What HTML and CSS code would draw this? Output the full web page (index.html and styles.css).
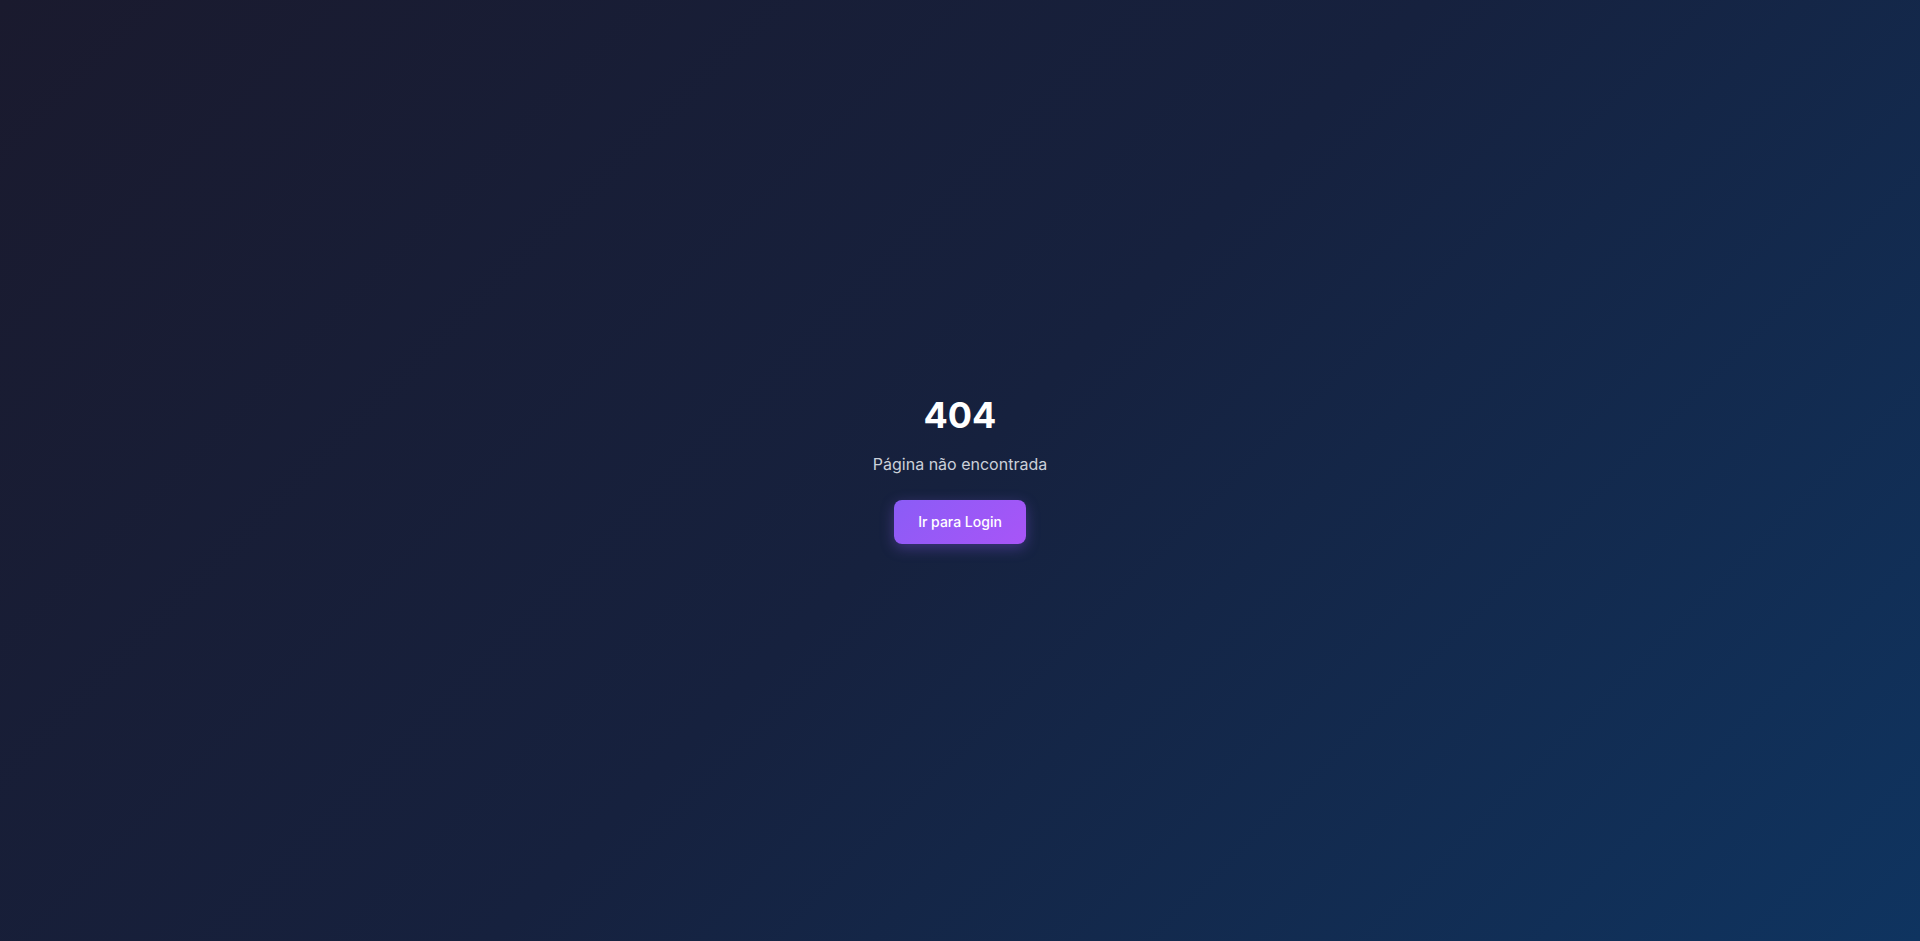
FILE: index.html
```html
<!DOCTYPE html>
<html lang="pt-BR">
<head>
<meta charset="utf-8">
<title>404</title>
<link rel="stylesheet" href="styles.css">
</head>
<body>
<main class="page">
  <div class="content">
    <h1 class="code">404</h1>
    <p class="message">Página não encontrada</p>
    <a class="button" href="#">Ir para Login</a>
  </div>
</main>
</body>
</html>
```
FILE: styles.css
```css
* { box-sizing: border-box; }
html, body { margin: 0; padding: 0; height: 100%; }
body {
  font-family: Inter, "Noto Sans", sans-serif;
  background: linear-gradient(135deg, #1a1a2e 0%, #16213e 50%, #0f3460 100%);
}
.page {
  min-height: 100vh;
  padding-bottom: 3px;
  display: flex;
  align-items: center;
  justify-content: center;
}
.content {
  display: flex;
  flex-direction: column;
  align-items: center;
  text-align: center;
}
.code {
  margin: 0 0 17px;
  font-size: 36px;
  line-height: 40px;
  font-weight: 700;
  color: #ffffff;
}
.message {
  margin: 0 0 24px;
  font-size: 16px;
  line-height: 24px;
  color: #cbd0d9;
}
.button {
  display: inline-block;
  padding: 12px 24px;
  font-size: 14px;
  line-height: 20px;
  font-weight: 500;
  color: #ffffff;
  text-decoration: none;
  border-radius: 8px;
  background: linear-gradient(135deg, #8b5cf6, #a855f7);
  box-shadow: 0 4px 14px rgba(139, 92, 246, 0.35);
}
```
